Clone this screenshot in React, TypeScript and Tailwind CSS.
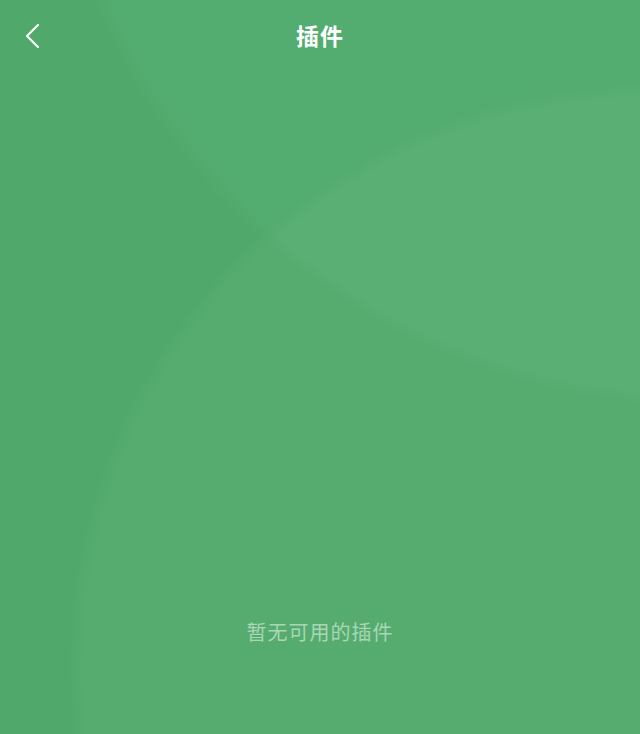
import React from "react";

export default function App() {
  return (
    <div
      className="w-[640px] h-[734px] overflow-hidden flex flex-col bg-[#50a96a] bg-no-repeat bg-[radial-gradient(circle_at_654px_668px,rgba(255,255,255,0.035)_570px,rgba(255,255,255,0)_586px),radial-gradient(circle_at_700px_-250px,rgba(150,230,210,0.05)_642px,rgba(150,230,210,0)_658px)]"
      style={{ fontFamily: '"Noto Sans CJK SC", "Noto Sans", sans-serif' }}
    >
      <header className="h-[70px] shrink-0 grid grid-cols-[1fr_auto_1fr] items-center px-[24px]">
        <button className="justify-self-start w-[20px] h-[28px] flex items-center mt-[2px]">
          <svg width="18" height="28" viewBox="0 0 18 28" fill="none">
            <polyline
              points="14,3 3,14 14,25"
              stroke="#ffffff"
              strokeWidth="2.2"
              strokeLinecap="round"
              strokeLinejoin="round"
            />
          </svg>
        </button>
        <h1 className="text-white text-[23px] font-bold leading-none tracking-[1px]">插件</h1>
        <div />
      </header>

      <main className="flex-1 flex flex-col items-center justify-end pb-[90px]">
        <p className="text-[20px] leading-[24px] text-[#a9d6b6] tracking-[1px]">暂无可用的插件</p>
      </main>
    </div>
  );
}
